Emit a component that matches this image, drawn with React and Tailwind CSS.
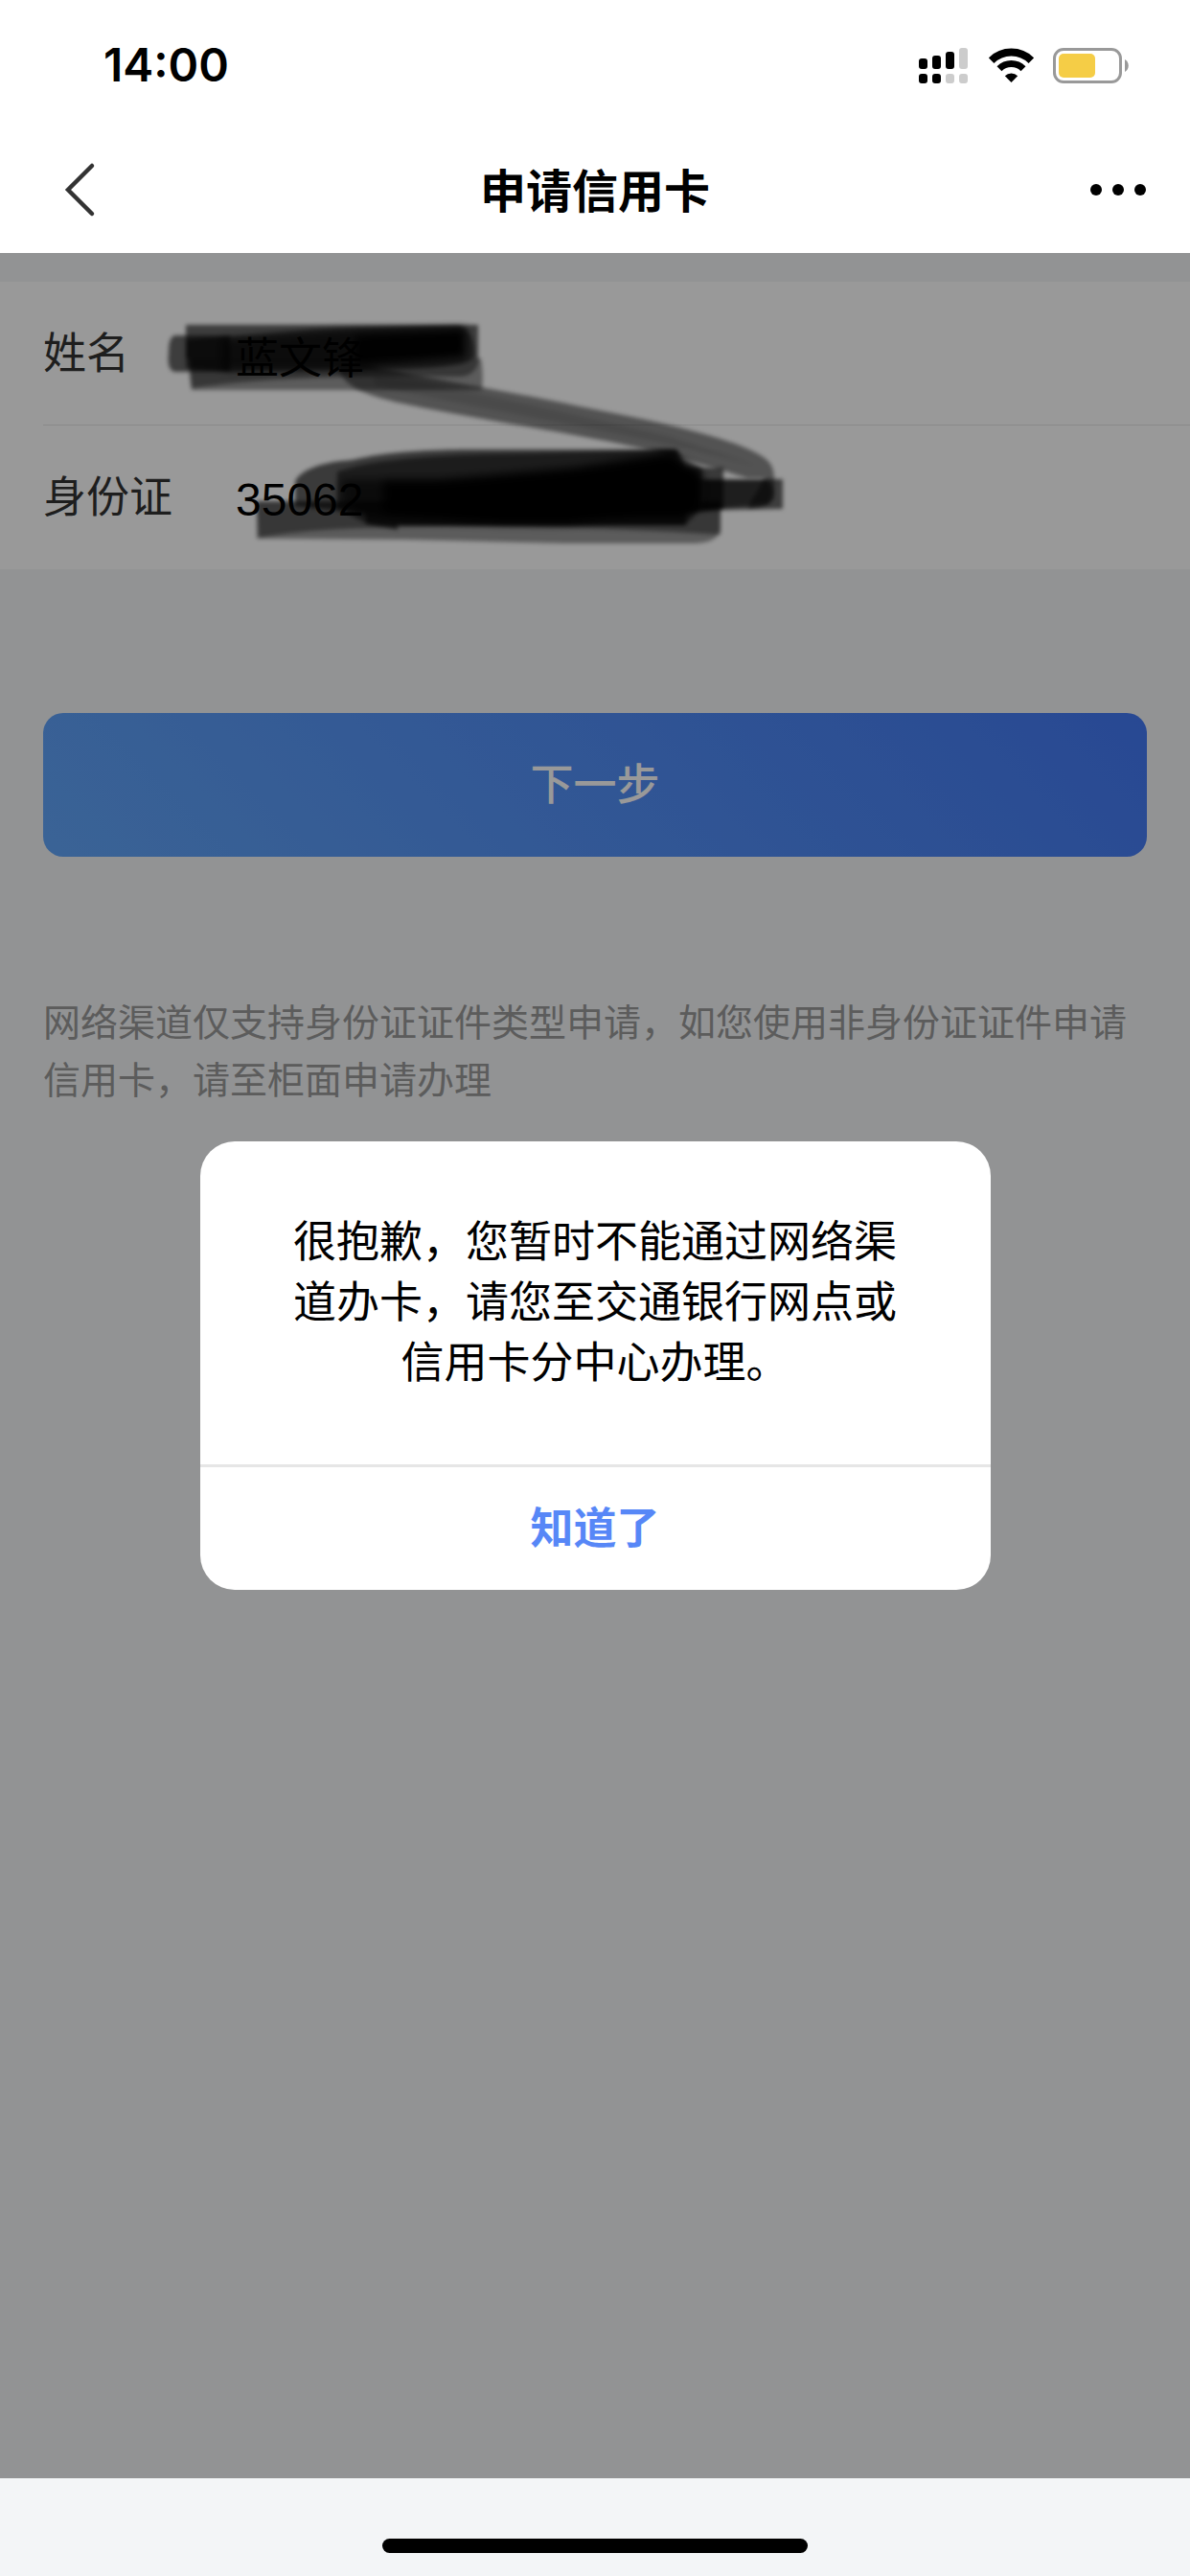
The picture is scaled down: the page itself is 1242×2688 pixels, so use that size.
import { useState } from 'react';

function SignalIcon() {
  return (
    <svg width="53" height="37" viewBox="0 0 53 37" aria-hidden="true">
      <g fill="#000">
        <rect x="0" y="11" width="9" height="11" rx="3" />
        <rect x="14" y="8" width="9" height="14" rx="3" />
        <rect x="28" y="4" width="9" height="18" rx="3" />
        <rect x="0" y="27" width="9" height="10" rx="3" />
        <rect x="14" y="27" width="9" height="10" rx="3" />
      </g>
      <g fill="#ccc">
        <rect x="42" y="0" width="9" height="22" rx="3" />
        <rect x="28" y="27" width="9" height="10" rx="3" />
        <rect x="42" y="27" width="9" height="10" rx="3" />
      </g>
    </svg>
  );
}

function WifiIcon() {
  return (
    <svg width="47" height="37" viewBox="0 0 47 37" aria-hidden="true">
      <g fill="none" stroke="#000">
        <path d="M2.6 13.2A29.5 29.5 0 0 1 44.4 13.2" strokeWidth="8" />
        <path d="M11 21.8A17.6 17.6 0 0 1 36 21.8" strokeWidth="7" />
      </g>
      <path d="M23.5 36L16.8 29.3A9.6 9.6 0 0 1 30.2 29.3Z" fill="#000" />
    </svg>
  );
}

function BatteryIcon() {
  return (
    <svg width="79" height="37" viewBox="0 0 79 37" aria-hidden="true">
      <rect x="1.5" y="1.5" width="69" height="34" rx="9.5" fill="none" stroke="#999" strokeWidth="3" />
      <rect x="6" y="6" width="38" height="25" rx="5" fill="#f5cd46" />
      <path d="M75 12C80 14.5 80 22.5 75 25Z" fill="#999" />
    </svg>
  );
}

function Header() {
  return (
    <header className="bg-white">
      <div className="flex h-[132px] items-center justify-between pl-27 pr-16 pt-1">
        <span className="font-['Inter',sans-serif] text-5xl font-semibold text-black">14:00</span>
        <div className="flex items-center gap-5">
          <SignalIcon />
          <WifiIcon />
          <BatteryIcon />
        </div>
      </div>
      <div className="grid h-[132px] grid-cols-[1fr_auto_1fr] items-center px-10">
        <button type="button" aria-label="返回" className="justify-self-start p-6">
          <svg width="36" height="60" viewBox="0 0 36 60" fill="none" stroke="#333" strokeWidth="4.5" strokeLinecap="round">
            <path d="M32 5L7 30L32 55" />
          </svg>
        </button>
        <h1 className="pb-1 text-5xl font-bold text-black">申请信用卡</h1>
        <button type="button" aria-label="更多" className="justify-self-end">
          <svg width="70" height="60" viewBox="0 0 70 60" fill="#000">
            <circle cx="12" cy="30" r="6" />
            <circle cx="35" cy="30" r="6" />
            <circle cx="58" cy="30" r="6" />
          </svg>
        </button>
      </div>
    </header>
  );
}

// Black marker strokes laid over the personal details
function MarkerStrokes() {
  return (
    <svg className="pointer-events-none absolute left-0 top-0" width="840" height="300" viewBox="0 294 840 300" aria-hidden="true">
      <defs>
        <filter id="soft" x="-5%" y="-20%" width="110%" height="140%">
          <feGaussianBlur stdDeviation="2" />
        </filter>
        <filter id="softer" x="-5%" y="-20%" width="110%" height="140%">
          <feGaussianBlur stdDeviation="5" />
        </filter>
      </defs>
      <g fill="#000" filter="url(#soft)">
        {/* name */}
        <path d="M198 374H502Q505 390 503 407H200Q197 390 198 374Z" opacity="0.4" />
        <path d="M197 374H500Q498 392 480 393Q300 390 200 405Z" opacity="0.4" />
        <path d="M194 339H499V374H194Z" opacity="0.6" />
        <path d="M182 350H240V388H182Q174 386 176 368Q176 352 182 350Z" opacity="0.6" />
        <path d="M194 355L330 344L478 339Q496 345 495 372Q490 383 420 385L240 388L194 384Z" opacity="0.5" />
      </g>
      <g fill="#000" filter="url(#softer)">
        <path d="M232 354L360 344L486 342V374L400 380L360 386H232Z" opacity="0.6" />
        <path d="M370 350L486 344V372L370 382Z" opacity="0.9" />
      </g>
      <g fill="#000" filter="url(#soft)">
        {/* link between the two rows */}
        <path d="M353 382L385 381C430 392 540 410 600 423C660 435 720 446 770 464C800 476 808 482 808 500V520Q800 530 780 530L798 499H780C740 486 700 476 670 468C600 452 500 438 420 421C375 411 358 402 353 382Z" opacity="0.46" />
        <path d="M390 390C470 403 600 432 700 456L790 486L700 464C600 444 480 422 390 402Z" opacity="0.1" />
      </g>
      <g fill="#000" filter="url(#soft)">
        {/* id number */}
        <path d="M268 523H752V552Q750 566 725 567H590L420 563L268 562Z" opacity="0.4" />
        <path d="M268 523H752V558Q600 548 440 550Q330 550 270 561Z" opacity="0.4" />
        <path d="M308 502C316 488 340 482 367 480C410 470 450 470 480 469H706L714 488H755V532L716 536V548H415V553L382 547V536L308 528Z" opacity="0.62" />
        <path d="M352 492C400 476 480 474 560 473L706 469L714 480L732 488V530L715 548H415L382 546L352 530Z" opacity="0.5" />
        <path d="M714 500H817V531L714 533Z" opacity="0.6" />
        <path d="M734 501H800Q812 510 802 526L734 532Z" opacity="0.5" />
      </g>
      <g fill="#000" filter="url(#softer)">
        <path d="M356 500H460L600 488L700 474L714 482L734 492V526L714 540Q650 538 590 546Q520 547 470 542L382 538L356 526Z" opacity="0.6" />
        <path d="M400 500H460L600 488L700 472L714 482L730 494V524L714 540Q650 538 590 546Q520 547 470 542L400 538Z" opacity="0.95" />
      </g>
    </svg>
  );
}

function Field({ id, label, value, font }) {
  return (
    <div className="flex h-[150px] items-center">
      <label htmlFor={id} className="w-[201px] shrink-0 pb-[6px] text-[45px] text-[#333]">{label}</label>
      <input
        id={id}
        defaultValue={value}
        className={`min-w-0 flex-1 bg-transparent pt-1 text-black outline-none ${font}`}
      />
    </div>
  );
}

function Dialog({ onClose }) {
  return (
    <div className="absolute inset-0 flex items-center justify-center bg-black/40">
      <div role="alertdialog" aria-describedby="message" className="w-[825px] overflow-hidden rounded-[36px] bg-white">
        <p id="message" className="px-24 pb-[78px] pt-[70px] text-center text-[45px] leading-[63px] text-black">
          很抱歉，您暂时不能通过网络渠道办卡，请您至交通银行网点或信用卡分中心办理。
        </p>
        <button
          type="button"
          onClick={onClose}
          className="block h-[131px] w-full border-t-3 border-[#e6e6e6] pb-[6px] text-[45px] font-bold text-[#5787f7]"
        >
          知道了
        </button>
      </div>
    </div>
  );
}

export default function App() {
  const [open, setOpen] = useState(true);

  return (
    <div className="flex min-h-screen flex-col bg-[#f3f5f7] font-['Noto_Sans_CJK_SC',sans-serif]">
      <Header />

      <main className="relative flex-1 pt-[30px]">
        <section className="relative bg-white pl-[45px]">
          <div className="divide-y divide-[#e5e5e5]">
            <Field id="name" label="姓名" value="蓝文锋" font="text-[45px]" />
            <Field id="idcard" label="身份证" value="35062" font="font-['Liberation_Sans',sans-serif] text-5xl" />
          </div>
          <MarkerStrokes />
        </section>

        <div className="px-[45px] pt-[150px]">
          <button
            type="button"
            onClick={() => setOpen(true)}
            className="h-[150px] w-full rounded-[21px] bg-[linear-gradient(45deg,#62a6fa,#4379f5)] pb-[6px] text-[45px] font-medium text-white"
          >
            下一步
          </button>
          <p className="mt-[140px] text-[39px] leading-[60px] text-[#999]">
            网络渠道仅支持身份证证件类型申请，如您使用非身份证证件申请信用卡，请至柜面申请办理
          </p>
        </div>

        {open && <Dialog onClose={() => setOpen(false)} />}
      </main>

      <footer className="flex h-[102px] items-end justify-center pb-6">
        <div className="h-[15px] w-[444px] rounded-full bg-black" />
      </footer>
    </div>
  );
}
